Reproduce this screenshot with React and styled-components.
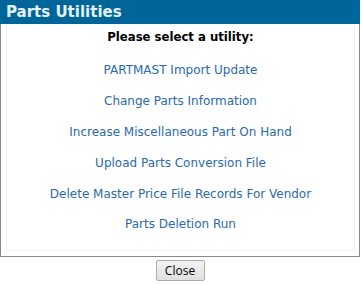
import React from "react";
import styled, { createGlobalStyle } from "styled-components";

const Global = createGlobalStyle`
  html, body { margin: 0; padding: 0; background: #fff; }
  body { font-family: "DejaVu Sans", Verdana, sans-serif; }
`;

const Dialog = styled.div`
  width: 360px;
  box-sizing: border-box;
  border: 1px solid #8a8a8a;
  border-top: none;
  background: #fff;
`;

const Header = styled.div`
  height: 24px;
  background: #006699;
  color: #e6f2fa;
  font-family: "DejaVu Sans", Verdana, sans-serif;
  font-weight: bold;
  font-size: 15px;
  line-height: 24px;
  padding-left: 6px;
  margin: 0 -1px;
`;

const Body = styled.div`
  margin: 0 4px 5px 5px;
  border: 1px solid #f2f2f2;
  border-top: none;
  height: 227px;
  box-sizing: border-box;
  display: flex;
  flex-direction: column;
  align-items: center;
  padding-top: 6px;
`;

const Prompt = styled.div`
  font-size: 11.7px;
  font-weight: bold;
  color: #000;
  line-height: 14px;
  margin-bottom: 19px;
`;

const LinkList = styled.div`
  display: flex;
  flex-direction: column;
  align-items: center;
  gap: 16.9px;
`;

const Link = styled.a`
  font-size: 12px;
  line-height: 14px;
  color: #2a6aa8;
  text-decoration: none;
  cursor: pointer;
`;

const Footer = styled.div`
  display: flex;
  justify-content: center;
  padding-top: 3px;
  width: 360px;
`;

const Button = styled.button`
  font-family: "Open Sans", "Noto Sans", sans-serif;
  font-size: 12px;
  color: #000;
  height: 21px;
  width: 49px;
  padding: 0;
  border: 1px solid #acacac;
  border-radius: 2px;
  background: linear-gradient(#f2f2f2, #e0e0e0);
  line-height: 18px;
`;

const items = [
  "PARTMAST Import Update",
  "Change Parts Information",
  "Increase Miscellaneous Part On Hand",
  "Upload Parts Conversion File",
  "Delete Master Price File Records For Vendor",
  "Parts Deletion Run",
];

export default function App() {
  return (
    <>
      <Global />
      <Dialog>
        <Header>Parts Utilities</Header>
        <Body>
          <Prompt>Please select a utility:</Prompt>
          <LinkList>
            {items.map((t) => (
              <Link key={t}>{t}</Link>
            ))}
          </LinkList>
        </Body>
      </Dialog>
      <Footer>
        <Button>Close</Button>
      </Footer>
    </>
  );
}
